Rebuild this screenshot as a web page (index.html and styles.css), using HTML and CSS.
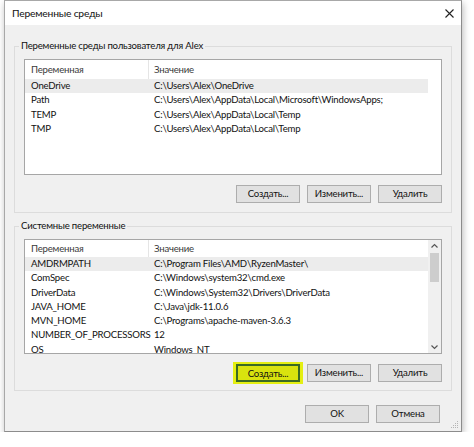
FILE: index.html
```html
<!DOCTYPE html>
<html lang="ru">
<head>
<meta charset="utf-8">
<link rel="stylesheet" href="styles.css">
</head>
<body>
<div class="window">
  <div class="titlebar">
    <span class="title">Переменные среды</span>
    <svg class="close" width="9" height="9" viewBox="0 0 9 9"><path d="M0.5 0.5 L8.5 8.5 M8.5 0.5 L0.5 8.5" stroke="#222" stroke-width="1.1" fill="none"/></svg>
  </div>
  <div class="client">
    <fieldset class="group">
      <legend>Переменные среды пользователя для Alex</legend>
      <div class="list list-user">
        <div class="rows">
          <div class="row head"><span class="c1">Переменная</span><span class="c2">Значение</span></div>
          <div class="row sel"><span class="c1">OneDrive</span><span class="c2">C:\Users\Alex\OneDrive</span></div>
          <div class="row"><span class="c1">Path</span><span class="c2">C:\Users\Alex\AppData\Local\Microsoft\WindowsApps;</span></div>
          <div class="row"><span class="c1">TEMP</span><span class="c2">C:\Users\Alex\AppData\Local\Temp</span></div>
          <div class="row"><span class="c1">TMP</span><span class="c2">C:\Users\Alex\AppData\Local\Temp</span></div>
        </div>
      </div>
      <div class="buttons">
        <button class="btn">Создать...</button>
        <button class="btn">Изменить...</button>
        <button class="btn">Удалить</button>
      </div>
    </fieldset>
    <fieldset class="group group-sys">
      <legend>Системные переменные</legend>
      <div class="list list-sys">
        <div class="rows">
          <div class="row head"><span class="c1">Переменная</span><span class="c2">Значение</span></div>
          <div class="row sel"><span class="c1">AMDRMPATH</span><span class="c2">C:\Program Files\AMD\RyzenMaster\</span></div>
          <div class="row"><span class="c1">ComSpec</span><span class="c2">C:\Windows\system32\cmd.exe</span></div>
          <div class="row"><span class="c1">DriverData</span><span class="c2">C:\Windows\System32\Drivers\DriverData</span></div>
          <div class="row"><span class="c1">JAVA_HOME</span><span class="c2">C:\Java\jdk-11.0.6</span></div>
          <div class="row"><span class="c1">MVN_HOME</span><span class="c2">C:\Programs\apache-maven-3.6.3</span></div>
          <div class="row"><span class="c1">NUMBER_OF_PROCESSORS</span><span class="c2">12</span></div>
          <div class="row"><span class="c1">OS</span><span class="c2">Windows_NT</span></div>
        </div>
        <div class="scrollbar">
          <svg class="arrow" width="13" height="12" viewBox="0 0 13 12"><path d="M3.5 7.5 L6.5 4.5 L9.5 7.5" stroke="#555" stroke-width="1.2" fill="none"/></svg>
          <div class="track"><div class="thumb"></div></div>
          <svg class="arrow" width="13" height="12" viewBox="0 0 13 12"><path d="M3.5 4.5 L6.5 7.5 L9.5 4.5" stroke="#555" stroke-width="1.2" fill="none"/></svg>
        </div>
      </div>
      <div class="buttons">
        <span class="hl"><button class="btn btn-focus">Создать...</button></span>
        <button class="btn">Изменить...</button>
        <button class="btn">Удалить</button>
      </div>
    </fieldset>
    <div class="dialog-buttons">
      <button class="btn">OK</button>
      <button class="btn">Отмена</button>
    </div>
    <svg class="grip" width="8" height="8" viewBox="0 0 8 8"><g fill="#b5b5b5"><rect x="6" y="0" width="1" height="1"/><rect x="4" y="2" width="1" height="1"/><rect x="6" y="2" width="1" height="1"/><rect x="2" y="4" width="1" height="1"/><rect x="4" y="4" width="1" height="1"/><rect x="6" y="4" width="1" height="1"/><rect x="0" y="6" width="1" height="1"/><rect x="2" y="6" width="1" height="1"/><rect x="4" y="6" width="1" height="1"/><rect x="6" y="6" width="1" height="1"/></g></svg>
  </div>
</div>
</body>
</html>
```
FILE: styles.css
```css
html, body {
  margin: 0;
  padding: 0;
  background: #ffffff;
}
body {
  font-family: Lato, "Noto Sans", sans-serif;
  font-size: 9.6px;
  letter-spacing: -0.2px;
  color: #111111;
}
.window {
  margin-left: 4px;
  width: 456px;
  border: 1px solid #a8a8a8;
  border-right-color: #8c8c8c;
  border-bottom-color: #8c8c8c;
  box-shadow: 1px 3px 7px rgba(0, 0, 0, 0.28);
  display: flex;
  flex-direction: column;
}
.titlebar {
  height: 24px;
  background: #ffffff;
  display: flex;
  align-items: center;
  justify-content: space-between;
  padding: 0 7px 0 7px;
}
.title {
  font-size: 10.3px;
  color: #111;
}
.close {
  display: block;
}
.client {
  background: #f0f0f0;
  padding: 14px 9px 8px 9px;
  display: flex;
  flex-direction: column;
  position: relative;
}
.group {
  margin: 0;
  border: 1px solid #dcdcdc;
  padding: 6px 9px 9px 9px;
  min-width: 0;
}
.group legend {
  padding: 0 2px;
  margin-left: -5px;
  line-height: 14px;
}
.group-sys {
  margin-top: 6px;
  padding-bottom: 8px;
}
.list {
  background: #ffffff;
  border: 1px solid #a6a6a6;
  display: flex;
  overflow: hidden;
  box-sizing: border-box;
}
.list-user {
  height: 116px;
}
.list-sys {
  height: 115px;
}
.rows {
  flex: 1;
  margin-right: 13px;
  display: flex;
  flex-direction: column;
}
.row {
  display: grid;
  grid-template-columns: 124px 1fr;
  height: 14.3px;
  line-height: 14px;
  white-space: nowrap;
  flex-shrink: 0;
}
.row.head {
  height: 19px;
  line-height: 19px;
  color: #3a3a3a;
}
.list-sys .row.head {
  height: 17px;
  line-height: 17px;
}
.row.head .c1 {
  border-right: 1px solid #e5e5e5;
}
.row.sel {
  background: #ececec;
}
.c1 {
  padding-left: 6px;
}
.c2 {
  padding-left: 5px;
}
.scrollbar {
  width: 13px;
  background: #f0f0f0;
  display: flex;
  flex-direction: column;
  margin-left: -13px;
}
.list-user .scrollbar {
  display: none;
}
.arrow {
  display: block;
}
.track {
  flex: 1;
  padding: 1px 2px;
}
.thumb {
  height: 29px;
  background: #cdcdcd;
}
.buttons {
  display: flex;
  justify-content: flex-end;
  gap: 7px;
  margin-top: 10px;
}
.group-sys .buttons {
  margin-top: 10px;
}
.btn {
  width: 64px;
  height: 18px;
  margin: 0;
  padding: 0;
  background: #e1e1e1;
  border: 1px solid #adadad;
  font-family: Lato, "Noto Sans", sans-serif;
  font-size: 9.6px;
  letter-spacing: -0.2px;
  color: #111111;
  line-height: 16px;
}
.hl {
  background: #e4ef12;
  padding: 2px 3px;
  margin: -2px -3px;
  display: flex;
}
.btn-focus {
  background: #d9e30e;
  border: 2px solid #3a6a24;
}
.dialog-buttons {
  display: flex;
  justify-content: flex-end;
  gap: 7px;
  margin-top: 14px;
  padding-right: 12px;
}
.grip {
  position: absolute;
  right: 2px;
  bottom: 2px;
}
```
